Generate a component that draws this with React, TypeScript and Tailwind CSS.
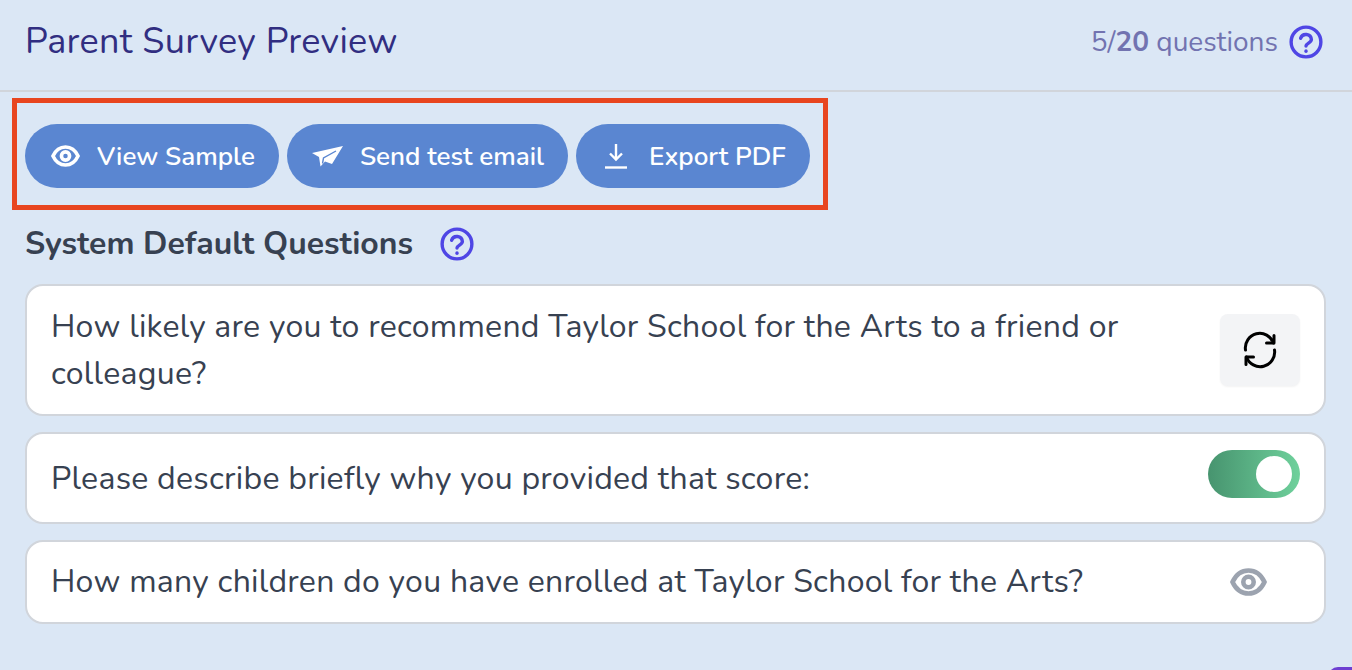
function HelpIcon({ className }: { className: string }) {
  return (
    <svg viewBox="0 0 24 24" fill="none" stroke="currentColor" strokeWidth="2.4" strokeLinecap="round" strokeLinejoin="round" className={className}>
      <circle cx="12" cy="12" r="10.5" />
      <path d="M8.2 9.4a3.9 3.9 0 0 1 7.6 .9c0 2.4-3.8 2.6-3.8 4.6" />
      <path d="M12 18.4v.1" />
    </svg>
  );
}

function EyeIcon({ className }: { className: string }) {
  return (
    <svg viewBox="0 0 37 28" fill="none" stroke="currentColor" strokeWidth="4.6" className={className}>
      <path d="M2.5 14C6 6.5 12 2.5 18.5 2.5S31 6.5 34.5 14C31 21.5 25 25.500 18.5 25.500S6 21.500 2.500 14Z" />
      <circle cx="18.5" cy="14" r="5.2" />
    </svg>
  );
}

function PlaneIcon() {
  return (
    <svg viewBox="0 0 31 21" className="w-[31px] h-[21px]">
      <path d="M31 0 0 7l7 4 1.5 9.5L13 15.5l7 2.5Z" fill="currentColor" />
      <path d="M10.5 17.5 11.5 12 24 5" fill="none" stroke="#5a86d1" strokeWidth="1.4" />
    </svg>
  );
}

function DownloadIcon() {
  return (
    <svg viewBox="0 0 22 25" fill="none" stroke="currentColor" strokeWidth="2.4" className="w-[22px] h-[25px]">
      <path d="M11 0v15M5 9.5l6 6 6-6" />
      <path d="M0 23.500h22" />
    </svg>
  );
}

function RefreshIcon() {
  return (
    <svg viewBox="0 0 50 50" fill="none" stroke="currentColor" strokeWidth="3" strokeLinecap="round" strokeLinejoin="round" className="w-[50px] h-[50px]">
      <path d="M10.500 25A14.500 14.500 0 0 1 38.500 18" />
      <path d="M39 10.500V18H31.500" />
      <path d="M39.500 25A14.500 14.500 0 0 1 11.500 32" />
      <path d="M11 39.500V32H18.500" />
    </svg>
  );
}

function SampleButton({ icon, label, className }: { icon: React.ReactNode; label: string; className: string }) {
  return (
    <button className={`h-[64px] rounded-full bg-[#5a86d1] text-white flex items-center font-semibold text-[26px] ${className}`}>
      {icon}
      <span>{label}</span>
    </button>
  );
}

export default function App() {
  return (
    <div className="w-[1352px] h-[670px] overflow-hidden bg-[#dbe7f5] font-['Nunito','Noto_Sans',sans-serif] relative">
      <header className="h-[92px] border-b-2 border-[#d1d5db] pb-[6px] pl-[25px] pr-[29px] flex items-center justify-between">
        <h1 className="text-[36px] text-[#312e81] tracking-[0.3px]">Parent Survey Preview</h1>
        <div className="flex items-center gap-[11px]">
          <span className="text-[28px] text-[#7273b0]">
            5/<b className="font-bold">20</b> questions
          </span>
          <HelpIcon className="w-[34px] h-[34px] text-[#4f46e5]" />
        </div>
      </header>

      <div className="relative mt-[32px] ml-[25px] flex gap-[8px] w-fit">
        <SampleButton icon={<EyeIcon className="w-[29px] h-[22px]" />} label="View Sample" className="gap-[17px] pl-[26px] pr-[24px]" />
        <SampleButton icon={<PlaneIcon />} label="Send test email" className="gap-[17px] pl-[25px] pr-[24px]" />
        <SampleButton icon={<DownloadIcon />} label="Export PDF" className="gap-[22px] pl-[29px] pr-[24px]" />
        <div className="absolute left-[-13px] right-[-18px] top-[-26px] bottom-[-22px] border-[5px] border-[#e8451f]" />
      </div>

      <div className="mt-[36px] ml-[25px] flex items-center gap-[27px] h-[40px]">
        <h2 className="text-[32px] font-bold text-[#374151]">System Default Questions</h2>
        <HelpIcon className="w-[34px] h-[34px] text-[#4f46e5]" />
      </div>

      <div className="ml-[25px] w-[1301px] mt-[20px] flex flex-col gap-[16px]">
        <div className="h-[132px] rounded-[18px] bg-white border-2 border-[#d1d5db] px-[24px] flex items-center justify-between">
          <p className="text-[32px] tracking-[0.27px] leading-[47px] text-[#374151] w-[1120px]">
            How likely are you to recommend Taylor School for the Arts to a friend or colleague?
          </p>
          <div className="w-[80px] h-[72px] rounded-[8px] bg-[#f3f4f6] shadow-xs flex items-center justify-center text-black">
            <RefreshIcon />
          </div>
        </div>
        <div className="h-[92px] rounded-[18px] bg-white border-2 border-[#d1d5db] px-[24px] flex items-center justify-between">
          <p className="text-[32px] tracking-[0.27px] text-[#374151] pt-[1px]">Please describe briefly why you provided that score:</p>
          <div className="w-[92px] h-[48px] mb-[8px] rounded-full bg-gradient-to-r from-[#47946f] to-[#6fd19c] flex items-center justify-end pr-[8px]">
            <div className="w-[36px] h-[36px] rounded-full bg-white" />
          </div>
        </div>
        <div className="h-[84px] rounded-[18px] bg-white border-2 border-[#d1d5db] pl-[24px] pr-[57px] flex items-center justify-between">
          <p className="text-[32px] tracking-[0.27px] text-[#374151]">How many children do you have enrolled at Taylor School for the Arts?</p>
          <EyeIcon className="w-[37px] h-[28px] text-[#9ca3af]" />
        </div>
      </div>

      <div className="absolute right-0 bottom-[-10px] w-[24px] h-[13px] rounded-tl-[10px] bg-[#6d3fd1]" />
    </div>
  );
}
